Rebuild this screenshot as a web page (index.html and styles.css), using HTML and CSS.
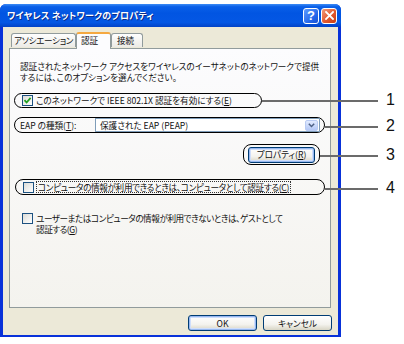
FILE: index.html
```html
<!DOCTYPE html>
<html lang="ja">
<head>
<meta charset="utf-8">
<link rel="stylesheet" href="styles.css">
</head>
<body>
<div class="page">
  <div class="window">
    <div class="titlebar">
      <span class="title">ワイヤレス ネットワークのプロパティ</span>
      <span class="tbtn help">?</span>
      <span class="tbtn close"><svg width="9" height="9" viewBox="0 0 9 9"><path d="M1 1L8 8M8 1L1 8" stroke="#fff" stroke-width="1.8" stroke-linecap="square"/></svg></span>
    </div>
    <div class="client">
      <div class="tabs">
        <span class="tab first">アソシエーション</span>
        <span class="tab active">認証</span>
        <span class="tab last">接続</span>
      </div>
      <div class="panel">
        <p class="desc">認証されたネットワーク アクセスをワイヤレスのイーサネットのネットワークで提供<br>するには、このオプションを選んでください。</p>
        <div class="callout row1">
          <span class="cb checked"><svg width="9" height="9" viewBox="0 0 9 9"><path d="M1.5 4.2L3.6 6.5L7.6 1.8" fill="none" stroke="#21a121" stroke-width="1.8"/></svg></span>
          <span class="lbl">このネットワークで IEEE 802.1X 認証を有効にする(<u>E</u>)</span>
        </div>
        <div class="callout row2">
          <span class="lbl eap">EAP の種類(<u>T</u>):</span>
          <span class="select">
            <span class="seltext">保護された EAP (PEAP)</span>
            <span class="drop"><svg width="7" height="5" viewBox="0 0 7 5"><path d="M0.8 0.8L3.5 3.5L6.2 0.8" fill="none" stroke="#4d6185" stroke-width="1.5"/></svg></span>
          </span>
        </div>
        <div class="row3">
          <div class="callout btnwrap">
            <span class="btn focus">プロパティ(<u>R</u>)</span>
          </div>
        </div>
        <div class="callout row4">
          <span class="cb"></span>
          <span class="lbl dotted">コンピュータの情報が利用できるときは、コンピュータとして認証する(<u>C</u>)</span>
        </div>
        <div class="row5">
          <span class="cb"></span>
          <span class="lbl">ユーザーまたはコンピュータの情報が利用できないときは、ゲストとして<br>認証する(<u>G</u>)</span>
        </div>
      </div>
      <div class="actions">
        <span class="btn wide focus">OK</span>
        <span class="btn wide">キャンセル</span>
      </div>
    </div>
  </div>
  <div class="lead" style="left:262px;top:100px;width:116px"></div>
  <div class="lead" style="left:325px;top:126px;width:53px"></div>
  <div class="lead" style="left:320px;top:155px;width:58px"></div>
  <div class="lead" style="left:325px;top:188px;width:53px"></div>
  <span class="num" style="top:92px">1</span>
  <span class="num" style="top:118px">2</span>
  <span class="num" style="top:147px">3</span>
  <span class="num" style="top:180px">4</span>
</div>
</body>
</html>
```
FILE: styles.css
```css
* { box-sizing: border-box; }
html, body { margin: 0; padding: 0; background: #fff; }
body {
  font-family: "Noto Sans CJK JP", "Liberation Sans", sans-serif;
  font-size: 8.6px;
  font-feature-settings: "palt";
  color: #111;
}
u { text-decoration: underline; text-underline-offset: 1px; }
.page { position: relative; width: 404px; height: 344px; padding-top: 4px; }

.window {
  width: 341px;
  height: 333px;
  border-radius: 6px 6px 0 0;
  background: #0831d9;
  display: flex;
  flex-direction: column;
  overflow: hidden;
}
.titlebar {
  height: 23px;
  flex: none;
  display: flex;
  align-items: center;
  padding: 0 4px 0 7px;
  background: linear-gradient(#3d8cf5 0%, #0a5fe8 12%, #0155e2 40%, #0457e4 80%, #0242c6 100%);
  gap: 2px;
}
.title {
  flex: 1;
  color: #fff;
  font-weight: bold;
  font-size: 9px;
  letter-spacing: 0.2px;
  white-space: nowrap;
  text-shadow: 1px 1px 0 #0a2a88;
}
.tbtn {
  width: 16px;
  height: 16px;
  border: 1px solid #fff;
  border-radius: 3px;
  display: flex;
  align-items: center;
  justify-content: center;
  color: #fff;
  font-family: "Liberation Sans", sans-serif;
  font-weight: bold;
  font-size: 13px;
}
.help { background: linear-gradient(135deg, #5d9bff, #2163e8 70%, #1b51d0); }
.close { background: linear-gradient(135deg, #f09a7b, #e2592f 55%, #c83c12); }

.client {
  flex: 1;
  margin: 0 3px 3px 3px;
  background: #ece9d8;
  padding: 4px 7px 4px 6px;
  display: flex;
  flex-direction: column;
}
.tabs {
  display: flex;
  align-items: flex-end;
  height: 17px;
  padding-left: 2px;
  position: relative;
  z-index: 1;
}
.tab {
  height: 14px;
  padding: 0 3px;
  border: 1px solid #919b9c;
  border-bottom: none;
  border-radius: 3px 3px 0 0;
  background: linear-gradient(#fefefe, #ecebe6);
  display: flex;
  align-items: center;
  line-height: 1;
  margin-bottom: 1px;
  white-space: nowrap;
}
.tab.first { width: 65px; padding: 0 2px; letter-spacing: -0.3px; }
.tab.last { width: 32px; padding-left: 5px; }
.tab.active {
  height: 17px;
  width: 35px;
  margin-bottom: -1px;
  background: #fcfcfe;
  border-top: 2px solid #f5a840;
  padding-left: 4px;
  padding-bottom: 2px;
}
.panel {
  height: 260px;
  border: 1px solid #919b9c;
  background: linear-gradient(#fcfcfe, #f4f3ee);
  padding: 12px 5px 0 4px;
  display: flex;
  flex-direction: column;
}
.desc {
  margin: 0 0 0 6px;
  line-height: 10.5px;
  white-space: nowrap;
}
.callout {
  border: 1px solid #000;
  border-radius: 8px;
  display: flex;
  align-items: center;
}
.row1 { width: 248px; height: 15px; margin-top: 11px; padding-left: 7px; gap: 3px; }
.row2 { height: 16px; margin-top: 9px; padding: 0 4px 0 5px; gap: 4px; }
.row3 { display: flex; justify-content: flex-end; margin-top: 11px; padding-right: 5px; }
.btnwrap { width: 77px; height: 21px; justify-content: center; }
.row4 { height: 16px; margin-top: 14px; margin-left: 1px; padding-left: 7px; gap: 2px; }
.row4 .lbl { letter-spacing: -0.33px; }
.row5 { display: flex; align-items: flex-start; margin-top: 18px; padding-left: 8px; gap: 3px; }
.row5 .lbl { line-height: 11px; letter-spacing: -0.45px; }
.row5 .cb { margin-top: 0; }

.cb {
  width: 11px;
  height: 11px;
  flex: none;
  border: 1px solid #1c5180;
  background: linear-gradient(135deg, #dcdcd7, #fff);
  display: flex;
  align-items: center;
  justify-content: center;
}
.lbl { white-space: nowrap; line-height: 1; }
.dotted { border: 1px dotted #333; padding: 1px 1px; }
.eap { width: 71px; }
.select {
  flex: 1;
  height: 14px;
  border: 1px solid #7f9db9;
  background: #fff;
  display: flex;
  align-items: center;
  padding: 0 1px 0 4px;
}
.seltext { flex: 1; }
.drop {
  width: 13px;
  height: 11px;
  background: linear-gradient(#e1eafe, #b4c8f6);
  border: 1px solid #b9cbf3;
  border-radius: 2px;
  display: flex;
  align-items: center;
  justify-content: center;
}
.btn {
  height: 16px;
  width: 67px;
  border: 1px solid #003c74;
  border-radius: 3px;
  background: linear-gradient(#ffffff, #f4f3ee 60%, #d8d5c5);
  display: flex;
  align-items: center;
  justify-content: center;
  line-height: 1;
  white-space: nowrap;
}
.btn.focus { box-shadow: inset 0 0 0 1px #97b8f0, inset 0 0 0 2px #cfdefb; }
.actions {
  display: flex;
  justify-content: flex-end;
  gap: 6px;
  margin-top: 7px;
  margin-right: -1px;
}
.btn.wide { width: 69px; }

.lead {
  position: absolute;
  height: 2px;
  background: #6b6b6b;
}
.num {
  position: absolute;
  left: 386px;
  font-family: "Liberation Sans", sans-serif;
  font-size: 16px;
  line-height: 16px;
}
```
